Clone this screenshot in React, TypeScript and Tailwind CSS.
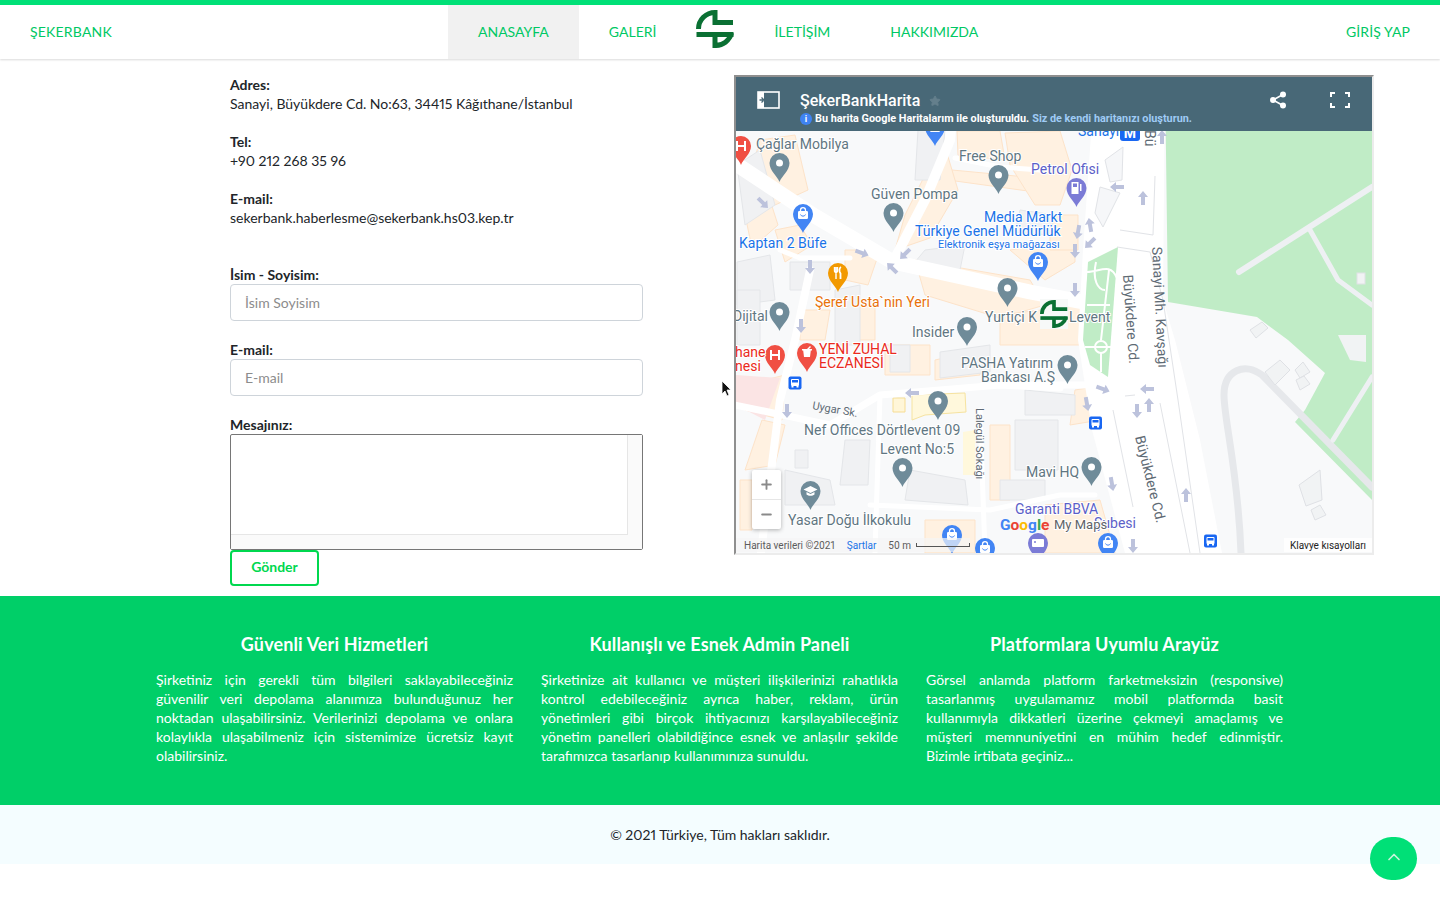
import { ChevronUp, Minus, Plus, Star } from "lucide-react";

const navLink = "flex items-center px-[30px] pb-[2px] text-[#00c864]";

type Tone = "gray" | "blue" | "orange" | "red" | "purple";

const toneColor: Record<Tone, string> = {
  gray: "#6f8b99",
  blue: "#4285f4",
  orange: "#f29900",
  red: "#f04f43",
  purple: "#7b7bd6",
};

const pins: { x: number; y: number; tone: Tone; kind?: string }[] = [
  { x: 779.5, y: 163, tone: "gray" },
  { x: 998.5, y: 175, tone: "gray" },
  { x: 893.5, y: 213, tone: "gray" },
  { x: 1007.5, y: 288, tone: "gray" },
  { x: 967, y: 327, tone: "gray" },
  { x: 779.5, y: 312, tone: "gray" },
  { x: 1067.5, y: 365, tone: "gray" },
  { x: 938, y: 401, tone: "gray" },
  { x: 902.5, y: 468, tone: "gray" },
  { x: 1091.5, y: 467, tone: "gray" },
  { x: 810.5, y: 491, tone: "gray", kind: "school" },
  { x: 803, y: 214, tone: "blue", kind: "bag" },
  { x: 1038, y: 262, tone: "blue", kind: "bag" },
  { x: 952, y: 535, tone: "blue", kind: "bag" },
  { x: 985, y: 548, tone: "blue", kind: "bag" },
  { x: 1108, y: 543, tone: "blue", kind: "bag" },
  { x: 935, y: 127, tone: "blue", kind: "bag" },
  { x: 838, y: 273, tone: "orange", kind: "food" },
  { x: 1076.5, y: 188, tone: "purple", kind: "fuel" },
  { x: 1038, y: 543, tone: "purple", kind: "atm" },
  { x: 775, y: 355, tone: "red", kind: "hospital" },
  { x: 741, y: 146, tone: "red", kind: "hospital" },
  { x: 807, y: 353, tone: "red", kind: "pharmacy" },
];

const labels: { x: number; y: number; t: string; c: string; s?: number }[] = [
  { x: 756, y: 149, t: "Çağlar Mobilya", c: "#5f7682" },
  { x: 959, y: 161, t: "Free Shop", c: "#5f7682" },
  { x: 871, y: 199, t: "Güven Pompa", c: "#5f7682" },
  { x: 1031, y: 174, t: "Petrol Ofisi", c: "#5c5fc9" },
  { x: 984, y: 222, t: "Media Markt", c: "#1a73e8" },
  { x: 915, y: 236, t: "Türkiye Genel Müdürlük", c: "#1a73e8" },
  { x: 938, y: 248, t: "Elektronik eşya mağazası", c: "#1a73e8", s: 10.8 },
  { x: 739, y: 248, t: "Kaptan 2 Büfe", c: "#1a73e8" },
  { x: 815, y: 307, t: "Şeref Usta`nin Yeri", c: "#e8710a" },
  { x: 733, y: 321, t: "Dijital", c: "#5f7682" },
  { x: 985, y: 322, t: "Yurtiçi K", c: "#5f7682" },
  { x: 1069, y: 322, t: "Levent", c: "#5f7682" },
  { x: 912, y: 337, t: "Insider", c: "#5f7682" },
  { x: 735, y: 357, t: "hane", c: "#ea2a20" },
  { x: 735, y: 371, t: "nesi", c: "#ea2a20" },
  { x: 819, y: 354, t: "YENİ ZUHAL", c: "#ea2a20" },
  { x: 819, y: 368, t: "ECZANESİ", c: "#ea2a20" },
  { x: 961, y: 368, t: "PASHA Yatırım", c: "#5f7682" },
  { x: 981, y: 382, t: "Bankası A.Ş", c: "#5f7682" },
  { x: 804, y: 435, t: "Nef Offices Dörtlevent 09", c: "#5f7682" },
  { x: 880, y: 454, t: "Levent No:5", c: "#5f7682" },
  { x: 1026, y: 477, t: "Mavi HQ", c: "#5f7682" },
  { x: 788, y: 525, t: "Yasar Doğu İlkokulu", c: "#5f7682" },
  { x: 1015, y: 514, t: "Garanti BBVA", c: "#5c5fc9" },
  { x: 1094, y: 528, t: "Şubesi", c: "#5c5fc9" },
];

const rotated: { x: number; y: number; r: number; t: string; s?: number }[] = [
  { x: 1152, y: 247, r: 87, t: "Sanayi Mh. Kavşağı" },
  { x: 1123, y: 275, r: 86, t: "Büyükdere Cd." },
  { x: 1135, y: 437, r: 76, t: "Büyükdere Cd." },
  { x: 1145, y: 130, r: 90, t: "Bü" },
  { x: 812, y: 409, r: 10, t: "Uygar Sk.", s: 11 },
  { x: 976, y: 408, r: 90, t: "Lalegül Sokağı", s: 11 },
];

const arrows: [number, number, number][] = [
  [763, 203, 135], [862, 253, 110], [905, 254, 225], [892, 268, -45], [810, 267, 180], [801, 326, 180],
  [1162, 137, 0], [1117, 187, 270], [1143, 198, 0], [1090, 225, -10], [1078, 232, 190], [1090, 243, 225],
  [1075, 251, 180], [1075, 290, 180], [912, 393, 270], [787, 411, 180], [1103, 389, 110], [1147, 389, 270],
  [1149, 405, 0], [1137, 411, 180], [1087, 404, 170], [1186, 495, 0], [1112, 484, 170], [1133, 546, 180],
];

const warm = [
  "760,140 795,135 808,190 775,205 750,175",
  "745,215 770,200 778,225 752,248",
  "775,230 800,225 812,245 785,262",
  "845,250 880,250 868,285 845,280",
  "957,131 1000,131 1005,160 958,155",
  "952,170 1037,178 1035,192 948,180",
  "1005,133 1060,131 1072,170 1060,205 1035,205 1010,165",
  "905,215 930,165 946,150 958,190 930,238 895,250",
  "915,260 1030,280 1045,305 1000,318 925,295",
  "1010,250 1075,240 1075,262 1045,280",
  "1050,215 1078,215 1078,250 1050,250",
  "1000,315 1082,305 1082,345 1000,345",
  "857,300 875,302 875,340 857,340",
  "745,385 785,375 782,420 745,410",
  "762,420 785,425 775,465 745,470",
  "800,310 830,310 825,340 800,340",
  "1075,390 1105,385 1100,420 1070,425",
  "925,520 975,520 975,553 925,553",
  "1045,505 1100,500 1115,553 1045,553",
  "935,360 980,350 980,375 935,380",
  "885,345 930,345 930,375 885,375",
  "990,425 1010,425 1010,500 990,500",
  "740,480 752,480 752,530 740,530",
];

const grayBlocks = [
  "737,165 760,150 775,205 745,225",
  "737,262 770,255 775,300 737,305",
  "790,262 830,262 830,290 790,290",
  "835,290 860,285 860,345 835,345",
  "737,290 760,290 760,345 737,345",
  "925,250 965,245 960,270 915,262",
  "1020,210 1055,215 1050,235 1015,232",
  "890,345 910,345 910,372 890,372",
  "940,352 990,345 990,372 940,378",
  "1015,420 1058,420 1058,470 1015,470",
  "1025,390 1075,395 1075,415 1025,415",
  "845,440 870,440 868,485 840,485",
  "785,470 830,480 835,505 785,505",
  "910,470 965,480 968,505 905,500",
  "918,130 945,130 940,180 915,180",
  "1000,480 1045,480 1045,500 1000,500",
  "795,450 808,450 808,468 795,468",
];

function PinGlyph({ kind }: { kind?: string }) {
  if (kind === "bag") {
    return (
      <g>
        <rect x="-5" y="-3" width="10" height="8" rx="1.2" fill="#fff" />
        <path d="M-2.500-3v-.800a2.500 2.500 0 0 1 5 0V-3" fill="none" stroke="#fff" strokeWidth="1.300" />
        <path d="M-2.500 .500a2.700 2.700 0 0 0 5 0" fill="none" stroke="#4285f4" strokeWidth="1" />
      </g>
    );
  }
  if (kind === "hospital") {
    return <path d="M-4-5v10M4-5v10M-4 0h8" stroke="#fff" strokeWidth="2" fill="none" />;
  }
  if (kind === "pharmacy") {
    return (
      <g fill="#fff">
        <path d="M-5-4h10v1.500h-1.200l-.8 6.500h-6l-.8-6.500H-5z" />
        <path d="M0-4 3-7l1 1-2 2z" />
      </g>
    );
  }
  if (kind === "food") {
    return (
      <g stroke="#fff" strokeWidth="1.400" fill="none">
        <path d="M-3.500-6v4a1.500 1.500 0 0 0 3 0v-4M-2-6V6" />
        <path d="M3-6c-2 1-2 5-.5 6.500V6" strokeWidth="1.800" />
      </g>
    );
  }
  if (kind === "fuel") {
    return (
      <g fill="#fff">
        <rect x="-5" y="-6" width="7" height="12" />
        <rect x="-3.500" y="-4.500" width="4" height="3.500" fill="#7b7bd6" />
        <rect x="3.500" y="-4" width="1.500" height="7" />
      </g>
    );
  }
  if (kind === "atm") {
    return (
      <g>
        <rect x="-6" y="-4" width="12" height="8" rx="1" fill="#fff" />
        <circle cx="-3" cy="-1" r="1" fill="#7b7bd6" />
      </g>
    );
  }
  if (kind === "school") {
    return (
      <g fill="#fff">
        <path d="M0-5 7-1.500 0 2-7-1.500z" />
        <path d="M-4 1v2.500c2 1.700 6 1.700 8 0V1L0 3z" />
      </g>
    );
  }
  return <circle r="3.500" fill="#fff" />;
}

function Pin({ x, y, tone, kind }: { x: number; y: number; tone: Tone; kind?: string }) {
  return (
    <g transform={`translate(${x} ${y})`}>
      <path d="M0 19C-2 13-10 8-10 0A10 10 0 1 1 10 0C10 8 2 13 0 19Z" fill={toneColor[tone]} />
      <PinGlyph kind={kind} />
    </g>
  );
}

function BusStop({ x, y }: { x: number; y: number }) {
  return (
    <g transform={`translate(${x} ${y})`}>
      <rect x="-6.500" y="-6.500" width="13" height="13" rx="2" fill="#1967f2" />
      <rect x="-4" y="-4" width="8" height="7" rx="1" fill="#fff" />
      <rect x="-3" y="-3" width="6" height="2.500" fill="#1967f2" />
      <rect x="-3.500" y="3" width="2" height="1.500" fill="#fff" />
      <rect x="1.500" y="3" width="2" height="1.500" fill="#fff" />
    </g>
  );
}

function LogoStrokes() {
  return (
    <>
      <path d="M37 12.500H19V2.500A16.500 16.500 0 0 0 2.500 19" />
      <path d="M.5 24.500H37.500" />
      <path d="M19 24.500V35.500A16.500 16.500 0 0 0 35.500 23" />
    </>
  );
}

function MapCanvas() {
  return (
    <svg viewBox="736 77 636 476" className="block h-[476px] w-[636px]">
      <rect x="736" y="77" width="636" height="476" fill="#f8f9fa" />
      <polygon
        points="1165,77 1372,77 1372,500 1295,422 1305,410 1325,373 1288,340 1257,317 1168,302"
        fill="#c0ecc6"
      />
      {warm.map((p) => (
        <polygon key={p} points={p} fill="#fff1e1" stroke="#fde3c9" strokeWidth="1" />
      ))}
      {grayBlocks.map((p) => (
        <polygon key={p} points={p} fill="#f0f1f3" stroke="#e4e6e9" strokeWidth="1" />
      ))}
      <polygon points="736,375 780,378 765,420 736,405" fill="#fbe4e4" />
      <polygon points="893,398 905,398 905,412 893,412" fill="#fff6d8" stroke="#f6dd94" />
      <polygon points="912,395 965,393 966,412 925,415 912,420" fill="#fff8dc" stroke="#f6e3a0" />
      <polygon points="963,432 975,430 975,475 963,475" fill="#fff8dc" />

      <polygon
        points="1095,77 1165,77 1163,300 1175,340 1200,440 1222,553 1125,553 1092,430 1078,340 1083,250"
        fill="#fff"
      />
      <g fill="none" stroke="#fff" strokeLinecap="round" strokeLinejoin="round">
        <path d="M730 160 813 215 893 262 1030 292 1115 308" strokeWidth="15" />
        <path d="M893 262 925 200 950 140 955 77" strokeWidth="10" />
        <path d="M810 270 795 340 780 400 760 560" strokeWidth="8" />
        <path d="M735 405 830 425 880 395 1000 385 1060 388" strokeWidth="7" />
        <path d="M880 395 875 552" strokeWidth="5" />
        <path d="M955 158 1000 167 1040 170" strokeWidth="5" />
        <path d="M980 410 985 553" strokeWidth="5" />
        <path d="M870 505 990 510 1060 495 1095 495" strokeWidth="5" />
        <path d="M850 258 800 258 780 250" strokeWidth="5" />
        <path d="M1010 385 1110 385" strokeWidth="7" />
      </g>

      <polygon points="1088,262 1118,247 1108,377 1090,365 1083,340" fill="#c0ecc6" />
      <g fill="none" stroke="#fff" strokeWidth="2">
        <circle cx="1101" cy="347" r="6" />
        <path d="M1087 272C1100 272 1110 262 1117 278M1096 262C1092 280 1098 290 1105 290M1109 270 1101 340M1101 353V372M1085 347H1113M1087 305H1110" />
      </g>

      <g fill="#f6f7f9" stroke="#e1e3e7">
        <polygon points="1100,187 1120,193 1103,227 1095,213" />
        <polygon points="1105,160 1123,147 1122,180 1110,182" />
      </g>
      <g fill="none" stroke="#e1e3e7">
        <path d="M1120 230 1153 235 1155 176M1117 247 1150 252 1163 300 1178 400 1200 553M1113 410 1133 507M1160 403 1190 553M1135 395 1125 396" />
      </g>

      <g fill="none" strokeLinecap="round" strokeLinejoin="round" stroke="#eef0f3">
        <path d="M1372 187 1239 272" strokeWidth="6" />
        <path d="M1310 230 1338 280 1372 305" strokeWidth="5" />
        <path d="M1241 553C1238 470 1224 420 1224 395C1224 370 1245 362 1262 375L1372 487" strokeWidth="7" stroke="#e6e8eb" />
        <path d="M1372 377 1333 440" strokeWidth="5" />
      </g>
      <g fill="#f1f3f4" stroke="#dfe1e5">
        <rect x="1357" y="273" width="8" height="11" />
        <polygon points="1338,335 1366,335 1366,362 1350,360" stroke="none" />
        <polygon points="1250,330 1262,322 1268,328 1256,338" />
        <polygon points="1299,485 1320,470 1322,500 1306,506" />
        <polygon points="1311,510 1320,505 1326,515 1315,520" />
        <polygon points="1265,372 1280,360 1290,370 1275,385" />
        <polygon points="1295,370 1303,362 1310,372 1300,378" />
        <polygon points="1296,380 1304,376 1310,384 1300,390" />
      </g>
      {arrows.map(([x, y, r]) => (
        <path
          key={`${x}-${y}`}
          transform={`translate(${x} ${y}) rotate(${r})`}
          d="M0-7 5-1H2V7H-2V-1H-5Z"
          fill="#bcc2dc"
        />
      ))}
      <text x="1078" y="136" fill="#1a73e8" fontSize="14" fontFamily="Roboto, sans-serif">Sanayi</text>
      <rect x="1120" y="122" width="20" height="19" rx="3" fill="#1967f2" />
      <text x="1130" y="138" fill="#fff" fontSize="14" fontWeight="700" textAnchor="middle" fontFamily="Roboto, sans-serif">M</text>
      {pins.map((p) => (
        <Pin key={`${p.x}-${p.y}`} {...p} />
      ))}
      <BusStop x={795} y={383} />
      <BusStop x={1095.5} y={423} />
      <BusStop x={1210.5} y={541} />
      <g fontFamily="Roboto, sans-serif" fontSize="14">
        {labels.map((l) => (
          <text
            key={l.t}
            x={l.x}
            y={l.y}
            fill={l.c}
            fontSize={l.s ?? 14}
            stroke="#ffffff"
            strokeWidth="2"
            paintOrder="stroke"
          >
            {l.t}
          </text>
        ))}
        {rotated.map((l) => (
          <text
            key={l.t + l.x}
            transform={`translate(${l.x} ${l.y}) rotate(${l.r})`}
            fill="#5f6b75"
            fontSize={l.s ?? 14}
          >
            {l.t}
          </text>
        ))}
      </g>
      <rect x="1040" y="299" width="28" height="30" fill="#f7f9f8" />
      <svg x="1040" y="300" width="28" height="28" viewBox="0 0 38 38" fill="none" stroke="#0a7033" strokeWidth="5">
        <LogoStrokes />
      </svg>
      <text x="1000" y="530" fontFamily="Roboto, sans-serif" fontSize="15.500" fontWeight="700">
        <tspan fill="#4285f4">G</tspan>
        <tspan fill="#ea4335">o</tspan>
        <tspan fill="#fbbc05">o</tspan>
        <tspan fill="#4285f4">g</tspan>
        <tspan fill="#34a853">l</tspan>
        <tspan fill="#ea4335">e</tspan>
      </text>
      <text x="1054" y="529" fontFamily="Roboto, sans-serif" fontSize="13" fill="#5f6368" stroke="#fff" strokeWidth="2" paintOrder="stroke">My Maps</text>
    </svg>
  );
}

function GoogleMap() {
  return (
    <div className="relative h-[480px] w-[640px] shrink-0 overflow-hidden border-2 border-t-[#8f8f8f] border-r-[#ececec] border-b-[#ececec] border-l-[#8f8f8f] font-[Roboto,sans-serif]">
      <MapCanvas />
      <div className="absolute top-0 right-0 left-0 flex h-[54px] items-start bg-[#486877] text-white">
        <svg viewBox="0 0 24 18" className="mt-[14px] ml-[21px] h-[18px] w-[24px]" fill="none">
          <rect x="1" y="1" width="21" height="16" stroke="#fff" strokeWidth="1.600" />
          <rect x="1" y="1" width="6" height="16" fill="#fff" />
          <path d="M2.500 9h3.500M4.500 6.500 7 9 4.500 11.500" stroke="#486877" strokeWidth="1.300" />
        </svg>
        <div className="mt-[13px] ml-[19px] flex flex-col">
          <div className="flex h-[22px] items-center text-[16px] leading-[20px] font-medium">
            ŞekerBankHarita
            <Star className="ml-[9px] h-[12px] w-[12px] fill-[#647f8c] text-[#647f8c]" />
          </div>
          <div className="flex h-[14px] items-center text-[10.850px] leading-[14px] font-bold">
            <span className="mr-[3px] flex h-[12px] w-[12px] items-center justify-center rounded-full bg-[#3f83f2] text-[9px] font-bold">
              i
            </span>
            Bu harita Google Haritalarım ile oluşturuldu.
            <span className="ml-[3px] text-[#9fcbf5]">Siz de kendi haritanızı oluşturun.</span>
          </div>
        </div>
        <div className="mt-[14px] ml-auto flex items-center gap-[43px] pr-[22px]">
          <svg viewBox="0 0 18 18" className="h-[18px] w-[18px]" fill="#fff" stroke="#fff" strokeWidth="1.600">
            <circle cx="14" cy="3.500" r="2.200" />
            <circle cx="4" cy="9" r="2.200" />
            <circle cx="14" cy="14.500" r="2.200" />
            <path d="M14 3.500 4 9 14 14.500" fill="none" />
          </svg>
          <svg viewBox="0 0 20 16" className="h-[16px] w-[20px]" fill="none" stroke="#fff" strokeWidth="2">
            <path d="M1 5V1H5M15 1H19V5M19 11V15H15M5 15H1V11" />
          </svg>
        </div>
      </div>
      <div className="absolute top-[393px] left-[16px] flex h-[59px] w-[29px] flex-col rounded-[2px] bg-white text-[#8a8a8a] shadow-[0_1px_4px_rgba(0,0,0,0.3)]">
        <div className="flex h-[30px] items-center justify-center border-b border-[#e6e6e6]">
          <Plus className="h-[15px] w-[15px]" strokeWidth={3} />
        </div>
        <div className="flex flex-1 items-center justify-center">
          <Minus className="h-[15px] w-[15px]" strokeWidth={3} />
        </div>
      </div>
      <div className="absolute bottom-[1px] left-0 flex h-[14px] items-center gap-[12px] bg-[#f5f5f5]/70 pl-[8px] text-[10px] text-[#5c5c5c]">
        <span>Harita verileri ©2021</span>
        <span className="text-[#1a73e8]">Şartlar</span>
        <span className="flex items-center gap-[5px]">
          50 m
          <span className="h-[4px] w-[54px] border-x border-b border-[#555]" />
        </span>
      </div>
      <div className="absolute right-0 bottom-[1px] flex h-[14px] items-center bg-white/80 px-[6px] text-[10px] text-[#222]">
        Klavye kısayolları
      </div>
    </div>
  );
}

function ContactBlock({ title, value }: { title: string; value: string }) {
  return (
    <div className="mb-[19px] leading-[19px]">
      <div className="font-bold">{title}</div>
      <div>{value}</div>
    </div>
  );
}

function Field({ label, placeholder }: { label: string; placeholder: string }) {
  return (
    <div className="mb-[19px]">
      <label className="block leading-[19px] font-bold">{label}</label>
      <input
        placeholder={placeholder}
        className="block h-[37px] w-full rounded-[4px] border border-[#ced4da] px-[14px] text-[14px] placeholder:text-[#8c8c8c]"
      />
    </div>
  );
}

const features = [
  {
    title: "Güvenli Veri Hizmetleri",
    text: "Şirketiniz için gerekli tüm bilgileri saklayabileceğiniz güvenilir veri depolama alanımıza bulunduğunuz her noktadan ulaşabilirsiniz. Verilerinizi depolama ve onlara kolaylıkla ulaşabilmeniz için sistemimize ücretsiz kayıt olabilirsiniz.",
  },
  {
    title: "Kullanışlı ve Esnek Admin Paneli",
    text: "Şirketinize ait kullanıcı ve müşteri ilişkilerinizi rahatlıkla kontrol edebileceğiniz ayrıca haber, reklam, ürün yönetimleri gibi birçok ihtiyacınızı karşılayabileceğiniz yönetim panelleri olabildiğince esnek ve anlaşılır şekilde tarafımızca tasarlanıp kullanımınıza sunuldu.",
  },
  {
    title: "Platformlara Uyumlu Arayüz",
    text: "Görsel anlamda platform farketmeksizin (responsive) tasarlanmış uygulamamız mobil platformda basit kullanımıyla dikkatleri üzerine çekmeyi amaçlamış ve müşteri memnuniyetini en mühim hedef edinmiştir. Bizimle irtibata geçiniz...",
  },
];

export default function App() {
  return (
    <div className="relative min-h-[900px] bg-white font-[Lato,sans-serif] text-[14px] text-[#212529] proportional-nums">
      <header className="flex h-[59px] items-stretch border-t-[5px] border-[#00e077] shadow-[0_1px_2px_rgba(0,0,0,0.15)]">
        <a className={`${navLink} tracking-[0.2px]`}>ŞEKERBANK</a>
        <nav className="ml-[306px] flex items-stretch">
          <a className={`${navLink} bg-[#f1f1f1]`}>ANASAYFA</a>
          <a className={navLink}>GALERİ</a>
          <div className="mx-[10px] w-[38px] pt-[5px]">
            <svg viewBox="0 0 38 38" className="h-[38px] w-[38px]" fill="none" stroke="#0a7033" strokeWidth="5">
              <LogoStrokes />
            </svg>
          </div>
          <a className={navLink}>İLETİŞİM</a>
          <a className={navLink}>HAKKIMIZDA</a>
        </nav>
        <a className={`${navLink} ml-auto tracking-[0.1px]`}>GİRİŞ YAP</a>
      </header>

      <main className="flex pt-[16px] pl-[230px]">
        <div className="w-[413px]">
          <ContactBlock title="Adres:" value="Sanayi, Büyükdere Cd. No:63, 34415 Kâğıthane/İstanbul" />
          <ContactBlock title="Tel:" value="+90 212 268 35 96" />
          <ContactBlock title="E-mail:" value="sekerbank.haberlesme@sekerbank.hs03.kep.tr" />
          <div className="h-[19px]" />
          <Field label="İsim - Soyisim:" placeholder="İsim Soyisim" />
          <Field label="E-mail:" placeholder="E-mail" />
          <label className="block leading-[19px] font-bold">Mesajınız:</label>
          <div className="flex h-[116px] flex-col rounded-[2px] border border-[#767676]">
            <div className="flex flex-1">
              <textarea className="flex-1 resize-none border-r border-b border-[#e6e6e6] outline-none" />
              <div className="w-[14px] bg-[#fafafa]" />
            </div>
            <div className="h-[14px] bg-[#fafafa]" />
          </div>
          <button className="mb-[10px] block h-[36px] w-[89px] rounded-[4px] border-2 border-[#00d84f] pb-[3px] font-bold text-[#00d84f]">
            Gönder
          </button>
        </div>
        <div className="ml-[91px]">
          <GoogleMap />
        </div>
      </main>

      <section className="flex h-[209px] gap-[28px] bg-[#00cf68] pt-[36px] pl-[156px] text-white">
        {features.map((f) => (
          <div key={f.title} className="w-[357px]">
            <h3 className="mb-[14px] text-center text-[18px] leading-[24px] font-bold tracking-[0.13px]">{f.title}</h3>
            <p className="text-justify leading-[19px]">{f.text}</p>
          </div>
        ))}
      </section>

      <footer className="flex h-[59px] items-center justify-center bg-[#f4fdff]">
        © 2021 Türkiye, Tüm hakları saklıdır.
      </footer>

      <button className="absolute top-[837px] left-[1370px] flex h-[43px] w-[47px] items-center justify-center rounded-full bg-[#00e077] text-[#c8f5dc]">
        <ChevronUp className="-mt-[4px] h-[20px] w-[20px]" />
      </button>
      <svg viewBox="0 0 12 18" className="absolute top-[380px] left-[721px] h-[18px] w-[12px]">
        <path d="M1 1v13l3-3 2 5 2-1-2-5h4z" fill="#111" stroke="#fff" strokeWidth=".8" />
      </svg>
    </div>
  );
}
